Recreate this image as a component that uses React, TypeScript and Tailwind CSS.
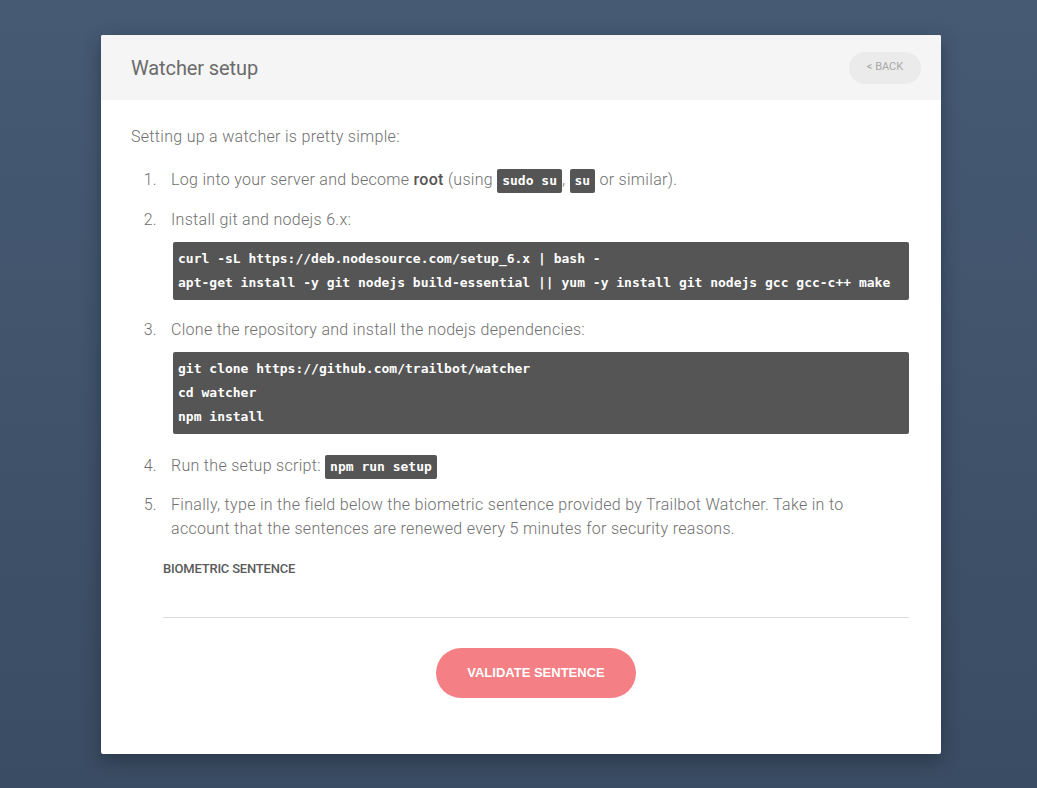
import React, { useState } from 'react';

const Code: React.FC<{ children: React.ReactNode }> = ({ children }) => (
  <code className="inline-block bg-[#555555] text-white font-bold text-[13px] leading-[24px] px-[5px] rounded-[2px] font-['DejaVu_Sans_Mono',monospace] tracking-normal align-middle">
    {children}
  </code>
);

const Block: React.FC<{ lines: string[]; className?: string }> = ({ lines, className }) => (
  <pre
    className={`bg-[#555555] text-white font-bold text-[13px] leading-[24px] px-[5px] py-[5px] rounded-[2px] font-['DejaVu_Sans_Mono',monospace] tracking-normal ml-[2px] whitespace-pre ${className ?? ''}`}
  >
    {lines.join('\n')}
  </pre>
);

const App: React.FC = () => {
  const [sentence, setSentence] = useState('');

  return (
    <div className="min-h-[788px] w-full bg-gradient-to-b from-[#465a73] to-[#3a4c63] pt-[35px] font-['Roboto',sans-serif]">
      <div className="ml-[101px] w-[840px] bg-white rounded-[2px] shadow-[0_6px_18px_rgba(20,30,45,0.45)]">
        {/* header */}
        <div className="h-[65px] bg-[#f5f5f5] flex items-center justify-between pl-[30px] pr-[20px] rounded-t-[2px]">
          <h1 className="text-[20px] font-normal text-[#6b6b6b] tracking-[-0.1px]">Watcher setup</h1>
          <button className="h-[32px] w-[72px] rounded-full bg-[#ebebeb] text-[11px] text-[#a8a8a8]">
            &lt; BACK
          </button>
        </div>

        {/* body */}
        <div className="pl-[30px] pr-[32px] pt-[25px] pb-[56px] text-[16px] leading-[24px] font-light tracking-[0.3px] text-[#707070]">
          <p>Setting up a watcher is pretty simple:</p>

          <ol className="mt-[19px]">
            <li className="flex">
              <span className="w-[26px] text-right mr-[14px] shrink-0">1.</span>
              <div>
                Log into your server and become <b className="font-medium text-[#555]">root</b> (using <Code>sudo su</Code>,{' '}
                <Code>su</Code> or similar).
              </div>
            </li>
            <li className="flex mt-[15px]">
              <span className="w-[26px] text-right mr-[14px] shrink-0">2.</span>
              <div className="flex-1">
                Install git and nodejs 6.x:
                <Block
                  className="mt-[10px]"
                  lines={[
                    'curl -sL https://deb.nodesource.com/setup_6.x | bash -',
                    'apt-get install -y git nodejs build-essential || yum -y install git nodejs gcc gcc-c++ make',
                  ]}
                />
              </div>
            </li>
            <li className="flex mt-[18px]">
              <span className="w-[26px] text-right mr-[14px] shrink-0">3.</span>
              <div className="flex-1">
                Clone the repository and install the nodejs dependencies:
                <Block
                  className="mt-[10px]"
                  lines={['git clone https://github.com/trailbot/watcher', 'cd watcher', 'npm install']}
                />
              </div>
            </li>
            <li className="flex mt-[20px]">
              <span className="w-[26px] text-right mr-[14px] shrink-0">4.</span>
              <div>
                Run the setup script: <Code>npm run setup</Code>
              </div>
            </li>
            <li className="flex mt-[14px]">
              <span className="w-[26px] text-right mr-[14px] shrink-0">5.</span>
              <div className="max-w-[700px]">
                Finally, type in the field below the biometric sentence provided by Trailbot Watcher. Take in to account
                that the sentences are renewed every 5 minutes for security reasons.
              </div>
            </li>
          </ol>

          <div className="ml-[32px] mt-[19px]">
            <label className="block text-[13px] leading-[18px] font-medium text-[#5a5a5a] tracking-[-0.2px]">
              BIOMETRIC SENTENCE
            </label>
            <input
              value={sentence}
              onChange={(e) => setSentence(e.target.value)}
              className="block w-full mt-[20px] h-[20px] border-b border-[#dcdcdc] outline-none text-[#555] bg-transparent"
            />

            <div className="flex justify-center mt-[30px]">
              <button className="w-[200px] h-[50px] rounded-full bg-[#f47f85] text-white text-[13px] font-bold tracking-normal font-['Liberation_Sans',sans-serif]">
                VALIDATE SENTENCE
              </button>
            </div>
          </div>
        </div>
      </div>
    </div>
  );
};

export default App;
